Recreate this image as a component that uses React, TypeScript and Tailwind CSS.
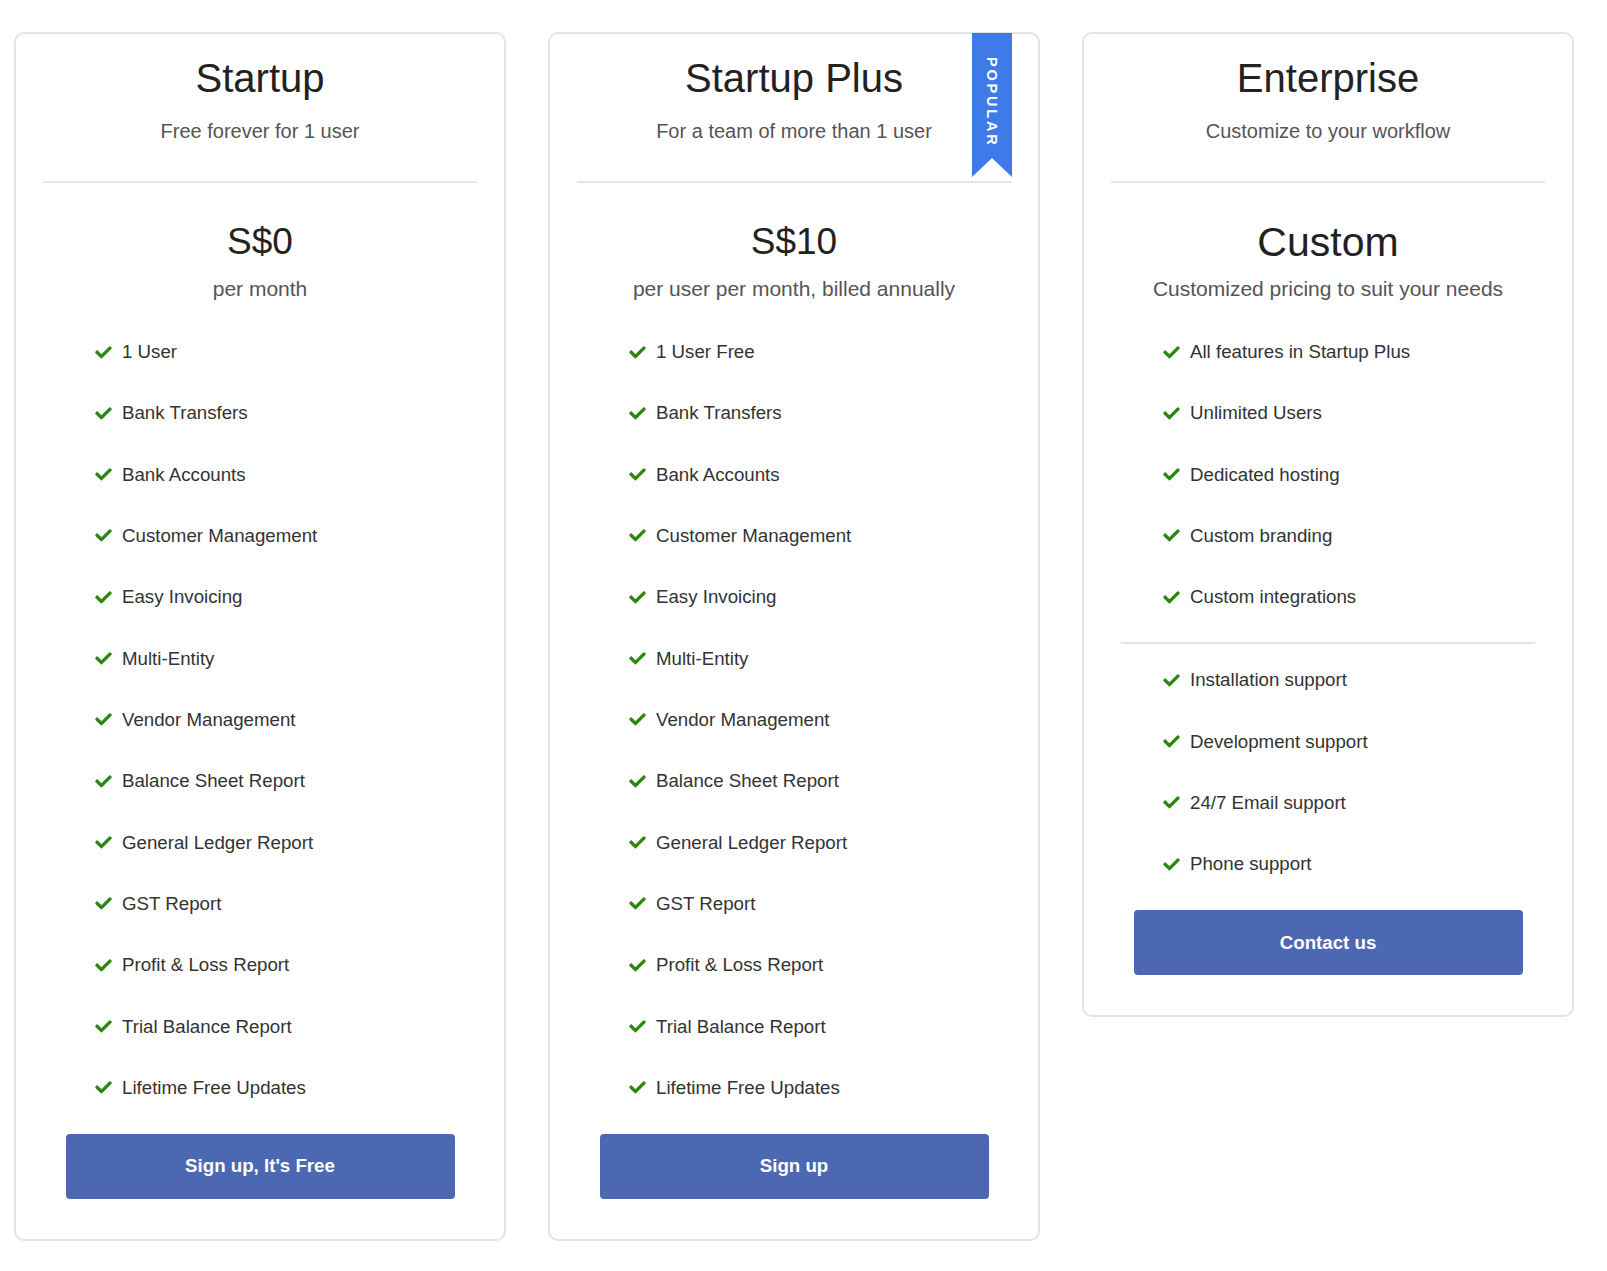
import React from "react";

type Plan = {
  name: string;
  tagline: string;
  price: string;
  priceNote: string;
  features: string[];
  extras?: string[];
  cta: string;
  popular?: boolean;
};

const plans: Plan[] = [
  {
    name: "Startup",
    tagline: "Free forever for 1 user",
    price: "S$0",
    priceNote: "per month",
    features: [
      "1 User",
      "Bank Transfers",
      "Bank Accounts",
      "Customer Management",
      "Easy Invoicing",
      "Multi-Entity",
      "Vendor Management",
      "Balance Sheet Report",
      "General Ledger Report",
      "GST Report",
      "Profit & Loss Report",
      "Trial Balance Report",
      "Lifetime Free Updates"
    ],
    cta: "Sign up, It's Free"
  },
  {
    name: "Startup Plus",
    tagline: "For a team of more than 1 user",
    price: "S$10",
    priceNote: "per user per month, billed annually",
    features: [
      "1 User Free",
      "Bank Transfers",
      "Bank Accounts",
      "Customer Management",
      "Easy Invoicing",
      "Multi-Entity",
      "Vendor Management",
      "Balance Sheet Report",
      "General Ledger Report",
      "GST Report",
      "Profit & Loss Report",
      "Trial Balance Report",
      "Lifetime Free Updates"
    ],
    cta: "Sign up",
    popular: true
  },
  {
    name: "Enterprise",
    tagline: "Customize to your workflow",
    price: "Custom",
    priceNote: "Customized pricing to suit your needs",
    features: [
      "All features in Startup Plus",
      "Unlimited Users",
      "Dedicated hosting",
      "Custom branding",
      "Custom integrations"
    ],
    extras: [
      "Installation support",
      "Development support",
      "24/7 Email support",
      "Phone support"
    ],
    cta: "Contact us"
  }
];

function Check() {
  return (
    <svg viewBox="0 60 512 400" className="h-[13px] w-[17px] shrink-0" aria-hidden="true">
      <path
        fill="#2b8612"
        d="M173.898 439.404l-166.4-166.4c-9.997-9.997-9.997-26.206 0-36.204l36.203-36.204c9.997-9.998 26.207-9.998 36.204 0L192 312.69 432.095 72.596c9.997-9.997 26.207-9.997 36.204 0l36.203 36.204c9.997 9.997 9.997 26.206 0 36.204l-294.4 294.401c-9.998 9.997-26.207 9.997-36.204-.001z"
      />
    </svg>
  );
}

function FeatureList({ items }: { items: string[] }) {
  return (
    <ul className="flex flex-col gap-[33.33px] pl-[79px]">
      {items.map((item) => (
        <li key={item} className="flex h-[28px] items-center gap-[10px] text-[18.7px] leading-[28px] text-[#333]">
          <Check />
          <span>{item}</span>
        </li>
      ))}
    </ul>
  );
}

function Ribbon() {
  return (
    <div className="absolute right-[26px] top-[-1px] flex h-[144px] w-[40px] justify-center bg-[#3e7be8] pt-[24px] [clip-path:polygon(0_0,100%_0,100%_100%,50%_86.8%,0_100%)]">
      <span className="text-[14.5px] font-bold leading-[40px] tracking-[2.8px] text-white [writing-mode:vertical-rl]">
        POPULAR
      </span>
    </div>
  );
}

function PlanCard({ plan }: { plan: Plan }) {
  const custom = plan.price === "Custom";
  return (
    <div className="relative w-[492px] shrink-0 self-start rounded-[10px] border-2 border-[#e4e4e4] bg-white">
      {plan.popular ? <Ribbon /> : null}
      <div className="pt-[20px] text-center">
        <h2 className="text-[40px] leading-[48px] text-[#222]">{plan.name}</h2>
        <p className="mt-[15px] text-[20px] leading-[28px] text-[#555]">{plan.tagline}</p>
      </div>
      <div className="mx-[27px] mt-[36px] h-[2px] bg-[#e6e6e6]" />
      <div className="mt-[37px] text-center">
        <div className={custom ? "text-[41px] leading-[44px] text-[#222]" : "text-[37px] leading-[44px] text-[#222]"}>
          {plan.price}
        </div>
        <div className="mt-[11px] text-[21px] leading-[28px] text-[#555]">{plan.priceNote}</div>
      </div>
      <div className="mt-[35px]">
        <FeatureList items={plan.features} />
      </div>
      {plan.extras ? (
        <>
          <div className="mx-[37px] mt-[31px] h-[2px] bg-[#e6e6e6]" />
          <div className="mt-[22px]">
            <FeatureList items={plan.extras} />
          </div>
        </>
      ) : null}
      <div className="mb-[40px] mt-[32px] flex justify-center">
        <button
          type="button"
          className="h-[65px] w-[389px] rounded-[4px] bg-[#4c68b3] text-[18.7px] font-bold text-white"
        >
          {plan.cta}
        </button>
      </div>
    </div>
  );
}

export default function App() {
  return (
    <div className="min-h-[1271px] bg-white pl-[14px] pt-[32px] font-['Liberation_Sans',Arial,sans-serif]">
      <div className="flex gap-[42px]">
        {plans.map((plan) => (
          <PlanCard key={plan.name} plan={plan} />
        ))}
      </div>
    </div>
  );
}
